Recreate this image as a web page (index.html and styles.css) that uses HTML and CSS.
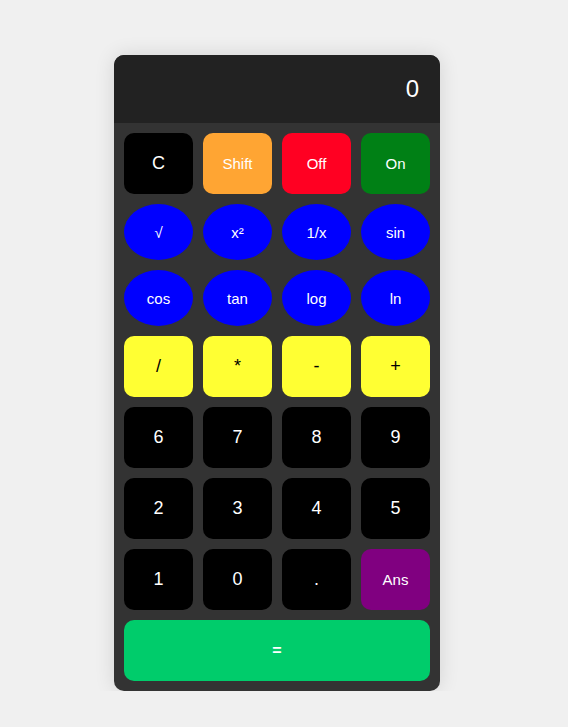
FILE: index.html
```html
<!DOCTYPE html>
<html lang="en">
<head>
<meta charset="utf-8">
<title>Calculator</title>
<link rel="stylesheet" href="styles.css">
</head>
<body>
<div class="calculator">
  <div class="display">0</div>
  <div class="keys">
    <button class="key key-dark">C</button>
    <button class="key key-small key-orange">Shift</button>
    <button class="key key-small key-red">Off</button>
    <button class="key key-small key-green">On</button>

    <button class="key fn">√</button>
    <button class="key fn">x²</button>
    <button class="key fn">1/x</button>
    <button class="key fn">sin</button>

    <button class="key fn">cos</button>
    <button class="key fn">tan</button>
    <button class="key fn">log</button>
    <button class="key fn">ln</button>

    <button class="key key-yellow">/</button>
    <button class="key key-yellow">*</button>
    <button class="key key-yellow">-</button>
    <button class="key key-yellow">+</button>

    <button class="key key-dark">6</button>
    <button class="key key-dark">7</button>
    <button class="key key-dark">8</button>
    <button class="key key-dark">9</button>

    <button class="key key-dark">2</button>
    <button class="key key-dark">3</button>
    <button class="key key-dark">4</button>
    <button class="key key-dark">5</button>

    <button class="key key-dark">1</button>
    <button class="key key-dark">0</button>
    <button class="key key-dark">.</button>
    <button class="key key-small key-purple">Ans</button>

    <button class="key key-equals">=</button>
  </div>
</div>
</body>
</html>
```

FILE: styles.css
```css
html, body {
  margin: 0;
  padding: 0;
  background: #f0f0f0;
  font-family: "Liberation Sans", Arial, sans-serif;
}

body {
  padding-top: 55px;
}

.calculator {
  width: 326px;
  margin-left: 114px;
  background: #333333;
  border-radius: 10px;
  overflow: hidden;
  box-shadow: 0 0 20px rgba(0, 0, 0, 0.12);
}

.display {
  background: #222222;
  color: #ffffff;
  font-size: 24px;
  line-height: 28px;
  height: 28px;
  padding: 20px 21px 20px 20px;
  text-align: right;
}

.keys {
  display: grid;
  grid-template-columns: repeat(4, 69px);
  grid-template-rows: 61px 56px 56px 61px 61px 61px 61px 61px;
  gap: 10px;
  padding: 10px;
}

.key {
  border: none;
  margin: 0;
  padding: 0;
  border-radius: 10px;
  font-family: "Liberation Sans", Arial, sans-serif;
  font-size: 18px;
  color: #ffffff;
  display: flex;
  align-items: center;
  justify-content: center;
}

.key-small {
  font-size: 15px;
}

.key-dark { background: #000000; }
.key-orange { background: #ffa533; }
.key-red { background: #ff0022; }
.key-green { background: #008015; }
.key-purple { background: #800080; }

.key-yellow {
  background: #ffff33;
  color: #000000;
}

.fn {
  background: #0000ff;
  border-radius: 50%;
  font-size: 15px;
}

.key-equals {
  grid-column: 1 / -1;
  background: #00cc6b;
  font-size: 16px;
  font-weight: bold;
}
```
